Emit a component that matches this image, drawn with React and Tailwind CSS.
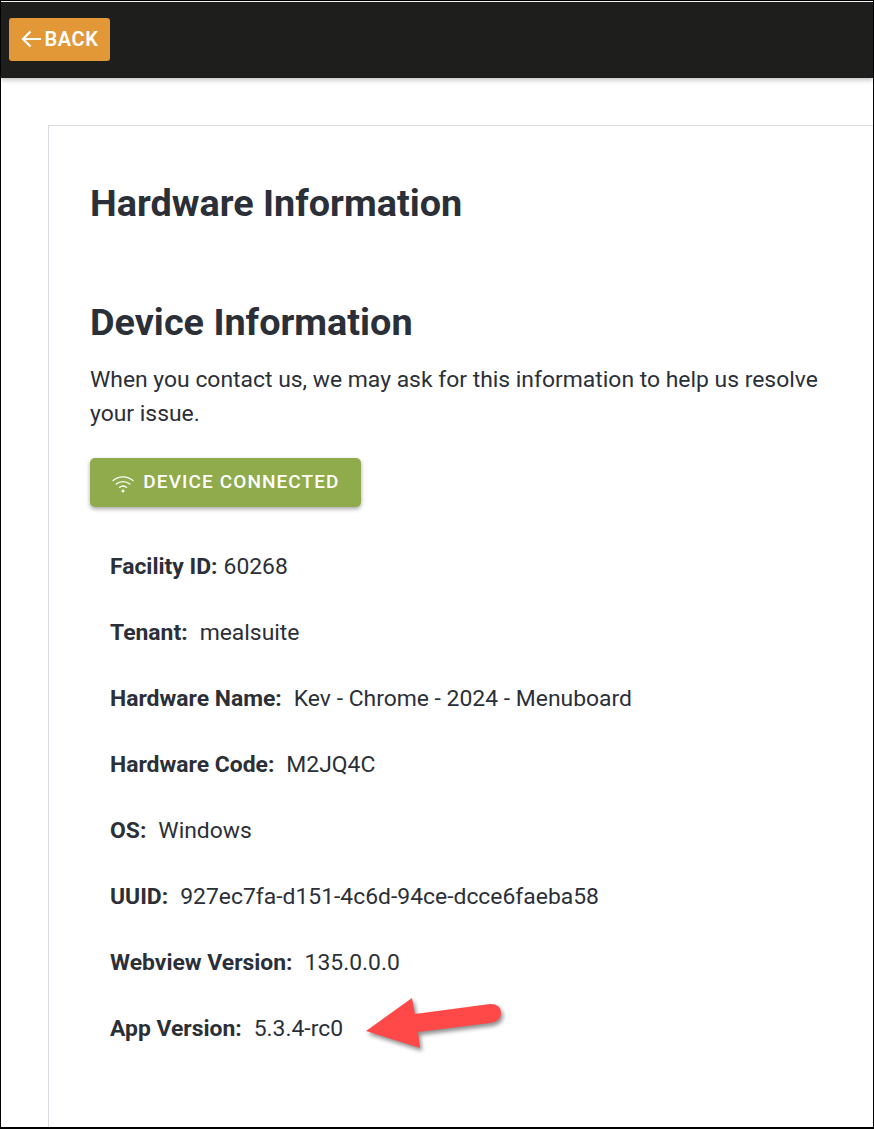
import React from 'react';

const rows = [
  { label: 'Facility ID:', value: '60268', gap: 'ml-[6px]' },
  { label: 'Tenant:', value: 'mealsuite', gap: 'ml-3' },
  { label: 'Hardware Name:', value: 'Kev - Chrome - 2024 - Menuboard', gap: 'ml-3' },
  { label: 'Hardware Code:', value: 'M2JQ4C', gap: 'ml-3' },
  { label: 'OS:', value: 'Windows', gap: 'ml-3' },
  { label: 'UUID:', value: '927ec7fa-d151-4c6d-94ce-dcce6faeba58', gap: 'ml-3' },
  { label: 'Webview Version:', value: '135.0.0.0', gap: 'ml-3' },
  { label: 'App Version:', value: '5.3.4-rc0', gap: 'ml-3' },
];

const WifiIcon = () => (
  <svg width="24" height="24" viewBox="0 0 24 24" fill="none" stroke="currentColor" strokeWidth="1.3" strokeLinecap="round">
    <path d="M2 9.5C7.8 4.6 16.2 4.6 22 9.5" />
    <path d="M5.2 13C9.2 9.7 14.8 9.7 18.8 13" />
    <path d="M8.4 16.4C10.6 14.7 13.4 14.7 15.6 16.4" />
    <circle cx="12" cy="20" r="1.5" fill="currentColor" stroke="none" />
  </svg>
);

const App = () => {
  return (
    <div className="relative h-[1129px] w-[874px] overflow-hidden border border-b-2 border-black bg-white font-['Roboto',sans-serif] text-[#2b2f38]">
      <div className="mt-px flex h-[76px] items-center bg-[#1e1e1c] pb-0.5 pl-2 shadow-[0_2px_5px_rgba(0,0,0,0.25)]">
        <button className="flex h-[43px] w-[101px] items-center justify-center rounded-[3px] bg-[#e39837] text-[20px] font-semibold tracking-[0.6px] text-white">
          <svg width="22" height="20" viewBox="0 0 22 20" fill="none" stroke="currentColor" strokeWidth="2.2" className="mr-[2px]">
            <path d="M21 10H3M10.5 2.5L3 10l7.5 7.5" />
          </svg>
          BACK
        </button>
      </div>

      <div className="ml-[47px] mt-[47px] -mr-px h-[1100px] border border-[#d8dbe0] pl-[41px] pr-[30px]">
        <h1 className="mt-[52px] text-[37.8px] font-bold leading-[50px]">Hardware Information</h1>
        <h2 className="mt-[69px] text-[37.8px] font-bold leading-[50px]">Device Information</h2>
        <p className="mt-[16px] text-[22.9px] leading-[34px]">
          When you contact us, we may ask for this information to help us resolve your issue.
        </p>
        <button className="mt-[27px] flex h-[49px] w-[271px] items-center justify-center gap-[8px] rounded-[5px] bg-[#8fab4b] text-[19px] font-medium tracking-[1.1px] text-white shadow-[0_2px_4px_rgba(0,0,0,0.35)]">
          <WifiIcon />
          DEVICE CONNECTED
        </button>
        <ul className="mt-[43px] flex flex-col gap-[32px] pl-5">
          {rows.map((row) => (
            <li key={row.label} className="text-[22.9px] leading-[34px]">
              <strong className="font-bold">{row.label}</strong>
              <span className={row.gap}>{row.value}</span>
            </li>
          ))}
        </ul>
      </div>

      <svg className="absolute left-[365px] top-[1000px] overflow-visible drop-shadow-[2px_3px_2px_rgba(0,0,0,0.45)]" width="140" height="52" viewBox="0 0 140 52" fill="none">
        <path d="M0 30L46 -3L49 13L124 3Q135 3 135 12Q135 20 124 22L52 31L54 47Z" fill="#ff4848" />
      </svg>
    </div>
  );
};

export default App;
